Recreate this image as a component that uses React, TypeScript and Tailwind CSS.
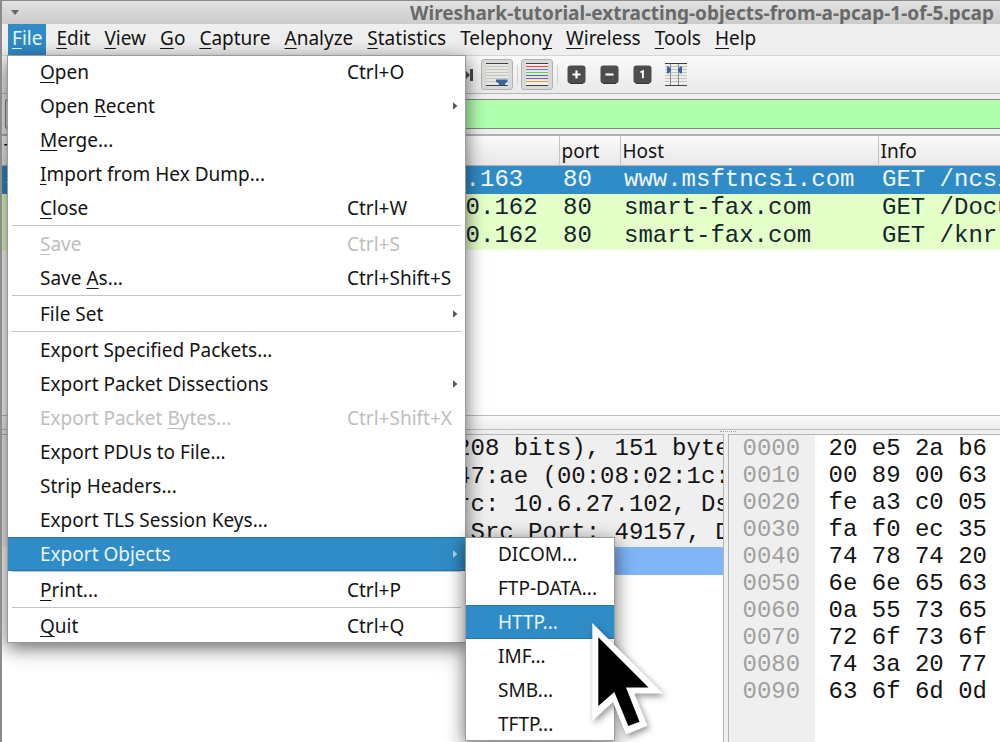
import type { ReactNode } from "react";

type MenuEntry = {
  label: string;
  mnemonic?: number;
  shortcut?: string;
  submenu?: boolean;
  disabled?: boolean;
  active?: boolean;
};

const menus: { label: string; key: number }[] = [
  { label: "File", key: 0 },
  { label: "Edit", key: 0 },
  { label: "View", key: 0 },
  { label: "Go", key: 0 },
  { label: "Capture", key: 0 },
  { label: "Analyze", key: 0 },
  { label: "Statistics", key: 0 },
  { label: "Telephony", key: 8 },
  { label: "Wireless", key: 0 },
  { label: "Tools", key: 0 },
  { label: "Help", key: 0 },
];

const fileMenu: MenuEntry[][] = [
  [
    { label: "Open", mnemonic: 0, shortcut: "Ctrl+O" },
    { label: "Open Recent", mnemonic: 5, submenu: true },
    { label: "Merge...", mnemonic: 0 },
    { label: "Import from Hex Dump...", mnemonic: 0 },
    { label: "Close", mnemonic: 0, shortcut: "Ctrl+W" },
  ],
  [
    { label: "Save", mnemonic: 0, shortcut: "Ctrl+S", disabled: true },
    { label: "Save As...", mnemonic: 5, shortcut: "Ctrl+Shift+S" },
  ],
  [{ label: "File Set", submenu: true }],
  [
    { label: "Export Specified Packets..." },
    { label: "Export Packet Dissections", submenu: true },
    { label: "Export Packet Bytes...", mnemonic: 14, shortcut: "Ctrl+Shift+X", disabled: true },
    { label: "Export PDUs to File..." },
    { label: "Strip Headers..." },
    { label: "Export TLS Session Keys..." },
    { label: "Export Objects", submenu: true, active: true },
  ],
  [{ label: "Print...", mnemonic: 0, shortcut: "Ctrl+P" }],
  [{ label: "Quit", mnemonic: 0, shortcut: "Ctrl+Q" }],
];

const exportObjects: MenuEntry[] = [
  { label: "DICOM..." },
  { label: "FTP-DATA..." },
  { label: "HTTP...", active: true },
  { label: "IMF..." },
  { label: "SMB..." },
  { label: "TFTP..." },
];

const packets = [
  { dst: "23.63.254.163", port: "80", host: "www.msftncsi.com", info: "GET /ncsi.txt", selected: true },
  { dst: "107.180.50.162", port: "80", host: "smart-fax.com", info: "GET /Documents", selected: false },
  { dst: "107.180.50.162", port: "80", host: "smart-fax.com", info: "GET /knr", selected: false },
];

const details = [
  "Frame 16: 151 bytes on wire (1208 bits), 151 bytes",
  "Ethernet II, Src: HewlettP_1c:47:ae (00:08:02:1c:47",
  "Internet Protocol Version 4, Src: 10.6.27.102, Dst:",
  "Transmission Control Protocol, Src Port: 49157, Dst",
];

const hexRows = [
  ["0000", "20 e5 2a b6"],
  ["0010", "00 89 00 63"],
  ["0020", "fe a3 c0 05"],
  ["0030", "fa f0 ec 35"],
  ["0040", "74 78 74 20"],
  ["0050", "6e 6e 65 63"],
  ["0060", "0a 55 73 65"],
  ["0070", "72 6f 73 6f"],
  ["0080", "74 3a 20 77"],
  ["0090", "63 6f 6d 0d"],
];

function Mnemonic({ text, at }: { text: string; at?: number }) {
  if (at === undefined) return <>{text}</>;
  return (
    <>
      {text.slice(0, at)}
      <span className="underline decoration-1 underline-offset-3 [text-decoration-skip-ink:none]">{text[at]}</span>
      {text.slice(at + 1)}
    </>
  );
}

function MenuItem({ item }: { item: MenuEntry }) {
  const tone = item.active
    ? "bg-[#308cc6] text-[#eaf5fc] border-y border-[#2478ac]"
    : item.disabled
      ? "text-[#bebebe] border-y border-transparent"
      : "text-[#141414] border-y border-transparent";
  return (
    <li role="none">
      <button
        type="button"
        role="menuitem"
        disabled={item.disabled}
        className={`flex h-[34px] w-full items-center pl-[33px] text-left whitespace-nowrap ${tone}`}
      >
        <span className="flex-1">
          <Mnemonic text={item.label} at={item.mnemonic} />
        </span>
        {item.shortcut && (
          <span className="w-[119px]">{item.shortcut}</span>
        )}
        {item.submenu && (
          <svg className="mr-2 h-2 w-[5px]" viewBox="0 0 5 8" aria-hidden="true">
            <path d="M0 0.3 L4.5 4 L0 7.7 Z" fill={item.active ? "#b5d8ee" : "#5e5e5e"} />
          </svg>
        )}
      </button>
    </li>
  );
}

function PressedButton({ label, children }: { label: string; children: ReactNode }) {
  return (
    <button
      type="button"
      aria-label={label}
      aria-pressed="true"
      className="flex h-[31px] w-8 items-center justify-center rounded-[3px] border border-[#b2b2b2] bg-[#d9d9d9]"
    >
      {children}
    </button>
  );
}

function ZoomButton({ label, children }: { label: string; children: ReactNode }) {
  return (
    <button type="button" aria-label={label} className="flex h-[31px] w-[33px] items-center justify-center">
      <svg width="19" height="19" viewBox="0 0 19 19">
        <rect x="0.5" y="0.5" width="18" height="18" rx="3" fill="#4d4d4d" />
        <path d="M3 18.5h13" stroke="#343434" strokeWidth="1" />
        {children}
      </svg>
    </button>
  );
}

const stripeYs = [4, 7, 10, 13, 16, 19];
const stripes = ["#ef4a4a", "#6f74d6", "#62d048", "#4a6fb0", "#8a5aa0", "#cdb040"];

function ToolBar() {
  return (
    <div className="flex h-[39px] items-center border-t border-b border-t-[#d5d5d5] border-b-[#b9b9b9] bg-linear-to-b from-[#f9f9f9] to-[#eaeaea] pl-[463px]">
      <button type="button" aria-label="Go to the last packet" className="mr-2 flex w-2 justify-end">
        <svg width="8" height="14" viewBox="0 0 8 14">
          <path d="M0 2 L5 7 L0 12 Z" fill="#4a4a4a" />
          <rect x="5" y="1" width="3" height="12" fill="#4a4a4a" />
        </svg>
      </button>
      <div className="flex items-center">
        <PressedButton label="Automatically scroll during live capture">
          <svg width="22" height="23" viewBox="0 0 22 23">
            <rect width="22" height="23" fill="#e6e6e3" />
            {stripeYs.map((y) => (
              <path key={y} d={`M0 ${y - 0.5}h22`} stroke="#c3c5c0" />
            ))}
            <path d="M0 0.5h22M0 22.5h22" stroke="#3f3f3f" />
            <path d="M10 16.5h11.5v2.2l-2.5 2v1.3h-6v-1.3l-3-2z" fill="#3465a4" />
          </svg>
        </PressedButton>
        <span className="mr-[3px] ml-1 h-5 w-px bg-[#cfcfcf]" />
        <PressedButton label="Draw packets using your coloring rules">
          <svg width="22" height="23" viewBox="0 0 22 23">
            <rect width="22" height="23" fill="#f1f1ef" />
            {stripeYs.map((y, i) => (
              <path key={y} d={`M0 ${y - 0.5}h22`} stroke={stripes[i]} strokeWidth="1.2" />
            ))}
            <path d="M0 0.5h22M0 22.5h22" stroke="#3f3f3f" />
          </svg>
        </PressedButton>
        <span className="mr-[2px] ml-1 h-5 w-px bg-[#cfcfcf]" />
        <ZoomButton label="Enlarge the main window text">
          <path d="M9.5 5.5v8M5.5 9.5h8" stroke="#fff" strokeWidth="2.2" />
        </ZoomButton>
        <ZoomButton label="Shrink the main window text">
          <path d="M5.5 9.5h8" stroke="#fff" strokeWidth="2.2" />
        </ZoomButton>
        <ZoomButton label="Return the main window text to its normal size">
          <path d="M7.5 7.4l2.4-1.2v7" fill="none" stroke="#fff" strokeWidth="1.9" />
        </ZoomButton>
        <button type="button" aria-label="Resize packet list columns" className="flex h-[31px] w-[33px] items-center justify-center">
          <svg width="22" height="23" viewBox="0 0 22 23">
            <rect width="22" height="23" fill="#eeeeec" />
            {stripeYs.map((y) => (
              <path key={y} d={`M0 ${y - 0.5}h22`} stroke="#c3c5c0" />
            ))}
            <path d="M0 0.5h22M0 22.5h22" stroke="#3f3f3f" />
            <path d="M5.5 1v21M13.5 1v21" stroke="#8b8e88" />
            <path d="M2 3.5h1.5L6 6v2l-2.5 2.5H2zM17 3.5h-1.5L13 6v2l2.5 2.5H17z" fill="#3465a4" />
          </svg>
        </button>
      </div>
    </div>
  );
}

function PacketList() {
  const cell = "overflow-hidden whitespace-nowrap pl-1";
  const head = "border-r border-[#c3c3c3] pt-px pl-[2px] text-left font-normal";
  return (
    <section className="min-h-0 flex-[19] overflow-hidden bg-white">
      <table className="w-full table-fixed border-collapse">
        <colgroup>
          <col className="w-[330px]" />
          <col className="w-[227px]" />
          <col className="w-[61px]" />
          <col className="w-[258px]" />
          <col />
        </colgroup>
        <thead>
          <tr className="h-[29px] border-b border-[#b5b5b5] bg-linear-to-b from-[#fbfbfb] to-[#e8e8e8] leading-7">
            <th className={head}>Time</th>
            <th className={head}>Dst</th>
            <th className={head}>port</th>
            <th className={head}>Host</th>
            <th className="pt-px pl-[2px] text-left font-normal">Info</th>
          </tr>
        </thead>
        <tbody className="font-['Liberation_Mono',monospace] text-[24px] leading-7">
          {packets.map((p, i) => (
            <tr key={i} className={`h-7 ${p.selected ? "bg-[#308cc6] text-[#f0f7fc]" : "bg-[#e4ffc7] text-[#12272e]"}`}>
              <td className={cell}>{p.selected ? "→" : ""}</td>
              <td className={cell}>{p.dst}</td>
              <td className={cell}>{p.port}</td>
              <td className={cell}>{p.host}</td>
              <td className={cell}>{p.info}</td>
            </tr>
          ))}
        </tbody>
      </table>
    </section>
  );
}

export default function App() {
  return (
    <div className="relative flex h-screen flex-col overflow-hidden border-l-2 border-[#8c8c8c] bg-[#efefef] font-['Noto_Sans',sans-serif] text-[19px] text-[#141414]">
      <header className="flex h-6 shrink-0 items-center justify-between border-t border-[#8c8c8c] bg-linear-to-b from-[#e2e2e2] to-[#cbcbcb] pr-[6px] pl-[9px]">
        <button type="button" aria-label="Window menu">
          <svg width="8" height="5" viewBox="0 0 8 5">
            <path d="M0 0h8L4 5z" fill="#666" />
          </svg>
        </button>
        <h1 className="leading-6 font-bold whitespace-nowrap text-[#696969]">
          Wireshark-tutorial-extracting-objects-from-a-pcap-1-of-5.pcap
        </h1>
      </header>

      <nav className="relative z-20 flex h-[31px] shrink-0 gap-[6px] bg-[#efefef] pl-[6px]">
        {menus.map((m, i) => (
          <button
            key={m.label}
            type="button"
            className={`flex h-[31px] px-1 leading-7 ${i === 0 ? "bg-[#308cc6] text-[#eaf5fc]" : ""}`}
          >
            <span>
              <Mnemonic text={m.label} at={m.key} />
            </span>
          </button>
        ))}

        <ul
          role="menu"
          className="absolute top-full left-[5px] w-[459px] bg-white shadow-[0_5px_18px_rgba(0,0,0,0.6)] outline-1 -outline-offset-1 outline-[#9a9a9a]"
        >
          {fileMenu.map((group, g) => (
            <li key={g} role="none">
              {g > 0 && <div role="separator" className="mx-[5px] h-[2px] border-t border-[#c4c4c4]" />}
              <ul role="group">
                {group.map((item) => (
                  <MenuItem key={item.label} item={item} />
                ))}
              </ul>
            </li>
          ))}
        </ul>
        <ul
          role="menu"
          className="absolute top-[513px] left-[463px] w-[150px] bg-white shadow-[0_5px_18px_rgba(0,0,0,0.6)] outline-1 -outline-offset-1 outline-[#9a9a9a]"
        >
          {exportObjects.map((item) => (
            <MenuItem key={item.label} item={item} />
          ))}
        </ul>
        <svg
          className="pointer-events-none absolute top-[597px] left-[588px] drop-shadow-[2px_3px_3px_rgba(0,0,0,0.4)]"
          width="76"
          height="116"
          viewBox="590 621 76 116"
          aria-hidden="true"
        >
          <path d="M592.3 623L663.3 693.5H634.3L647.5 725.7L626 734.5L613 702L592.3 721Z" fill="#fff" />
          <path d="M598.3 637.3L648.5 687.5H626L639.5 721.7L628.3 726L614.3 692L598.3 706Z" fill="#000" />
        </svg>
      </nav>

      <div className="shrink-0">
        <ToolBar />
        <div className="flex h-[42px] items-center border-b-2 border-[#b0b0b0] pl-[3px]">
          <button
            type="button"
            aria-label="Filter bookmarks"
            className="h-[30px] w-6 shrink-0 rounded-l-[3px] border border-r-0 border-[#858585] bg-[#e4e4e4]"
          />
          <input
            type="text"
            aria-label="Display filter"
            className="h-[30px] min-w-0 flex-1 border-y border-[#858585] bg-[#afffaf] outline-none"
          />
        </div>
      </div>

      <PacketList />

      <div className="h-[15px] shrink-0 border-y border-[#bcbcbc] bg-linear-to-b from-[#fafafa] to-[#eeeeee]" />
      <div className="flex h-1 shrink-0 items-center pl-[718px]">
        <div className="w-4 border-t border-dotted border-[#a0a0a0]" />
      </div>

      <main className="flex min-h-0 flex-[21] gap-1 font-['Liberation_Mono',monospace] text-[24px]">
        <section className="flex-[722] overflow-hidden border-t border-r border-[#b4b4b4] bg-white">
          <ul className="leading-7 whitespace-pre">
            {details.map((line) => (
              <li key={line} className="h-7 bg-[#efefef] pl-[22px]">
                {line}
              </li>
            ))}
            <li className="ml-[22px] h-7 bg-[#80b5f8]" />
          </ul>
        </section>
        <section className="flex flex-[272] overflow-hidden border-t border-l border-[#b4b4b4] bg-white leading-[27px] whitespace-pre">
          <div className="w-[86px] shrink-0 bg-[#efefef] pl-[14px] text-[#a0a0a0]">
            {hexRows.map(([offset]) => (
              <div key={offset}>{offset}</div>
            ))}
          </div>
          <div className="pl-[14px] text-[#141414]">
            {hexRows.map(([offset, bytes]) => (
              <div key={offset}>{bytes}</div>
            ))}
          </div>
        </section>
      </main>
    </div>
  );
}
